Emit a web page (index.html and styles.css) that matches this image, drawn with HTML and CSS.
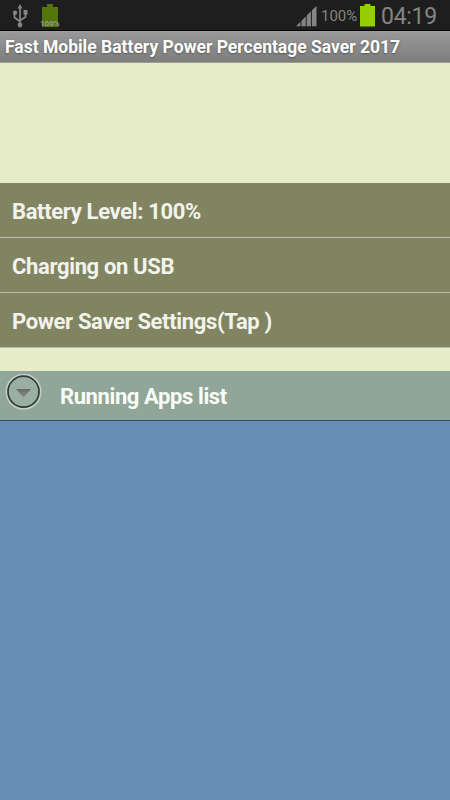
FILE: index.html
```html
<!DOCTYPE html>
<html lang="en">
<head>
<meta charset="UTF-8">
<meta name="viewport" content="width=device-width, initial-scale=1.0">
<title>Fast Mobile Battery Power Percentage Saver 2017</title>
<link rel="stylesheet" href="styles.css">
</head>
<body>
<div class="statusbar">
  <svg class="usb" width="16" height="24" viewBox="0 0 16 24">
    <path d="M8 3V21M2.500 10V13.500L8 17.500M13.500 10V13L8 16.500" fill="none" stroke="#858585" stroke-width="1.700"/>
    <path d="M8 0L10.500 4.500H5.500ZM11.500 6H15.500V10.500H11.500Z" fill="#858585"/>
    <circle cx="3" cy="8.800" r="2.200" fill="#858585"/>
    <circle cx="8" cy="21" r="2.400" fill="#858585"/>
  </svg>
  <div class="notification">
    <svg width="16" height="24" viewBox="0 0 16 24">
      <path d="M5 0H11V3H16V23H0V3H5Z" fill="#55750b"/>
    </svg>
    <span class="badge">100%</span>
  </div>
  <svg class="signal" width="21" height="21" viewBox="0 0 21 21">
    <path d="M0 20.200L4.500 15.700V20.200ZM5.500 14.700L9.700 10.500V20.200H5.500ZM10.700 9.500L14.900 5.300V20.200H10.700ZM15.900 4.300L20.500 0V20.200H15.900Z" fill="#858585"/>
  </svg>
  <span class="percent">100%</span>
  <svg class="battery" width="15" height="23" viewBox="0 0 15 23">
    <path d="M4.500 0H10.500V2H15V22.500H0V2H4.500Z" fill="#95cf00"/>
  </svg>
  <span class="clock">04:19</span>
</div>
<h1>Fast Mobile Battery Power Percentage Saver 2017</h1>
<div class="ad"></div>
<ul class="list">
  <li>Battery Level: 100%</li>
  <li>Charging on USB</li>
  <li>Power Saver Settings(Tap )</li>
</ul>
<div class="group">
  <svg class="expander" width="38" height="38" viewBox="0 0 38 38">
    <defs>
      <linearGradient id="arrow" x1="0" y1="0" x2="0" y2="1">
        <stop offset="0" stop-color="#676b69"/>
        <stop offset="1" stop-color="#8b8989"/>
      </linearGradient>
    </defs>
    <circle cx="19.500" cy="18.700" r="17" fill="none" stroke="#c4cec9" stroke-width="2"/>
    <circle cx="19.500" cy="18.700" r="15.500" fill="#9aafa4" stroke="#303b36" stroke-width="1.700"/>
    <path d="M12 16H27L19.500 24.500Z" fill="url(#arrow)"/>
  </svg>
  <span>Running Apps list</span>
</div>
</body>
</html>
```

FILE: styles.css
```css
* {
  box-sizing: border-box;
}

body {
  margin: 0;
  height: 800px;
  overflow: hidden;
  background-color: #678db7;
  font-family: Roboto, "Liberation Sans", sans-serif;
}

/* top bar */
.statusbar {
  display: flex;
  align-items: flex-start;
  height: 31px;
  padding-left: 12px;
  background-color: #1e1e1e;
  border-bottom: 1px solid #000;
  color: #858585;
  white-space: nowrap;
}

.usb {
  margin-top: 4px;
}

.notification {
  position: relative;
  width: 16px;
  height: 24px;
  margin: 4px 0 0 14px;
}

.badge {
  position: absolute;
  left: -2px;
  top: 16px;
  color: #999;
  font-size: 8px;
  line-height: 8px;
  font-weight: bold;
}

.signal {
  margin: 6px 0 0 238px;
}

.percent {
  width: 39px;
  margin-left: 4px;
  font-size: 15px;
  line-height: 32px;
}

.battery {
  margin-top: 4px;
}

.clock {
  margin-left: 6px;
  font-size: 23px;
  letter-spacing: -0.3px;
  line-height: 33px;
}

h1 {
  height: 32px;
  margin: 0;
  padding-left: 5px;
  background: linear-gradient(#989898, #7e7e7e);
  border-top: 1px solid #a0a0a0;
  border-bottom: 1px solid #9a9d91;
  color: #fff;
  font-size: 17.5px;
  line-height: 31px;
  white-space: nowrap;
  text-shadow: 0 1px 2px #555;
}

.ad {
  height: 120px;
  background-color: #e6edc8;
}

.list {
  margin: 0;
  padding: 0 0 23px;
  list-style: none;
  background-color: #e6edc8;
}

.list li {
  height: 55px;
  padding-left: 12px;
  background-color: #808461;
  border-bottom: 1px solid #bebcb4;
  color: #f3f3ed;
  font-size: 22px;
  font-weight: bold;
  letter-spacing: -0.35px;
  line-height: 58px;
}

.group {
  display: flex;
  height: 50px;
  padding-left: 4px;
  background-color: #8fa699;
  border-bottom: 1px solid #344c60;
  color: #fafdf5;
  font-size: 22px;
  font-weight: bold;
  letter-spacing: -0.4px;
  line-height: 52px;
}

.expander {
  margin: 2px 18px 0 0;
}
```
